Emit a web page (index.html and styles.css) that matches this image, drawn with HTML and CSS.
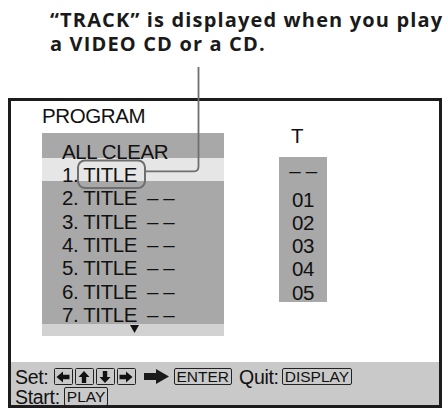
FILE: index.html
```html
<!DOCTYPE html>
<html>
<head>
<meta charset="utf-8">
<link rel="stylesheet" href="styles.css">
</head>
<body>
<div class="page">
  <div class="caption">
    <p>“TRACK” is displayed when you play</p>
    <p>a VIDEO CD or a CD.</p>
  </div>
  <div class="screen">
    <div class="main">
      <div class="left">
        <div class="heading">PROGRAM</div>
        <div class="list">
          <div class="row"><span class="label">ALL CLEAR</span></div>
          <div class="row sel"><span class="label">1. TITLE</span></div>
          <div class="row"><span class="label">2. TITLE</span><span class="dash">– –</span></div>
          <div class="row"><span class="label">3. TITLE</span><span class="dash">– –</span></div>
          <div class="row"><span class="label">4. TITLE</span><span class="dash">– –</span></div>
          <div class="row"><span class="label">5. TITLE</span><span class="dash">– –</span></div>
          <div class="row"><span class="label">6. TITLE</span><span class="dash">– –</span></div>
          <div class="row"><span class="label">7. TITLE</span><span class="dash">– –</span></div>
        </div>
        <div class="strip">
          <svg class="more" width="9" height="8" viewBox="0 0 9 8"><path d="M0 0 H9 L4.5 8 Z" fill="#111"/></svg>
        </div>
      </div>
      <div class="right">
        <div class="tlabel">T</div>
        <div class="tcol">
          <div class="tdash">– –</div>
          <div class="tnum">01</div>
          <div class="tnum">02</div>
          <div class="tnum">03</div>
          <div class="tnum">04</div>
          <div class="tnum">05</div>
        </div>
      </div>
    </div>
    <div class="footer">
      <div class="fline">
        <span class="word">Set:</span>
        <span class="keys">
          <span class="key"><svg width="16" height="14" viewBox="0 0 16 14"><path d="M1.5 7 L8 1.5 V4.8 H14.5 V9.2 H8 V12.5 Z" fill="#111"/></svg></span>
          <span class="key"><svg width="16" height="14" viewBox="0 0 16 14"><path d="M8 1 L13.5 7 H10.2 V13 H5.8 V7 H2.5 Z" fill="#111"/></svg></span>
          <span class="key"><svg width="16" height="14" viewBox="0 0 16 14"><path d="M8 13 L13.5 7 H10.2 V1 H5.8 V7 H2.5 Z" fill="#111"/></svg></span>
          <span class="key"><svg width="16" height="14" viewBox="0 0 16 14"><path d="M14.5 7 L8 1.5 V4.8 H1.5 V9.2 H8 V12.5 Z" fill="#111"/></svg></span>
        </span>
        <svg class="bigarrow" width="25" height="15" viewBox="0 0 25 15"><path d="M0 4 H12 V0 L25 7.5 L12 15 V11 H0 Z" fill="#1a1a1a"/></svg>
        <span class="btn">ENTER</span>
        <span class="word quit">Quit:</span>
        <span class="btn">DISPLAY</span>
      </div>
      <div class="fline">
        <span class="word start">Start:</span>
        <span class="btn tall">PLAY</span>
      </div>
    </div>
  </div>
  <svg class="callout" width="448" height="409" viewBox="0 0 448 409">
    <rect x="78" y="160.5" width="67" height="27.5" rx="7" fill="none" stroke="#6f6f6f" stroke-width="2"/>
    <path d="M145 171.3 H194 Q198.5 171.3 198.5 166.8 V67" fill="none" stroke="#6f6f6f" stroke-width="1.8"/>
  </svg>
</div>
</body>
</html>
```

FILE: styles.css
```css
* { box-sizing: border-box; }
html, body { margin: 0; padding: 0; background: #fff; }
.page {
  position: relative;
  width: 448px;
  height: 409px;
  overflow: hidden;
  color: #111;
}
.caption {
  height: 98px;
  padding: 7.8px 0 0 50px;
  font-family: "Open Sans", "DejaVu Sans", sans-serif;
  font-weight: 700;
  font-size: 20px;
  letter-spacing: 1.15px;
  line-height: 24.5px;
  color: #1a1a1a;
  white-space: nowrap;
}
.caption p { margin: 0; }
.screen {
  margin-left: 8px;
  width: 434px;
  height: 310px;
  border: 3px solid #1c1c1c;
  display: flex;
  flex-direction: column;
  font-family: "Liberation Sans", Arial, sans-serif;
}
.main {
  flex: 1;
  display: flex;
  align-items: flex-start;
  padding: 2.7px 0 0 31px;
  font-size: 20.5px;
  letter-spacing: -0.4px;
}
.left { width: 182px; }
.heading { line-height: 23px; margin-bottom: 6.3px; }
.list {
  background: #a8a8a8;
  padding: 1.8px 0 2.8px 0;
}
.row {
  height: 23.3px;
  line-height: 34px;
  padding-left: 20px;
  display: flex;
  white-space: nowrap;
}
.row.sel { background: #e6e6e6; }
.label { width: 85px; }
.strip {
  height: 12px;
  background: #d2d2d2;
  padding: 1px 0 0 87.5px;
}
.more { display: block; }
.right { margin: 20px 0 0 55px; }
.tlabel { line-height: 23px; padding-left: 12px; margin-bottom: 10.3px; }
.tcol {
  width: 48px;
  height: 145px;
  background: #a8a8a8;
  padding-top: 2.3px;
  text-align: center;
  line-height: 23.25px;
}
.tdash { margin-bottom: 5px; }
.footer {
  height: 43px;
  background: #c9c9c9;
  padding: 4.7px 0 0 4px;
  font-size: 19.5px;
  letter-spacing: -0.3px;
}
.fline {
  height: 20px;
  display: flex;
  align-items: center;
  white-space: nowrap;
}
.word { line-height: 20px; margin-right: 5px; }
.quit { margin-left: 7px; margin-right: 3px; }
.start { margin-right: 4px; }
.keys { display: flex; gap: 2px; }
.key {
  width: 19px;
  height: 17px;
  border: 1.5px solid #222;
  border-radius: 1.5px;
  display: flex;
  align-items: center;
  justify-content: center;
}
.key svg { display: block; }
.bigarrow { display: block; margin: 0 5px 0 8px; }
.btn {
  height: 17px;
  border: 1.5px solid #222;
  border-radius: 2px;
  padding: 0 2px;
  font-size: 15.5px;
  letter-spacing: 0;
  line-height: 1;
  display: flex;
  align-items: center;
}
.btn.tall { height: 18.5px; }
.callout {
  position: absolute;
  left: 0;
  top: 0;
  pointer-events: none;
}
```
